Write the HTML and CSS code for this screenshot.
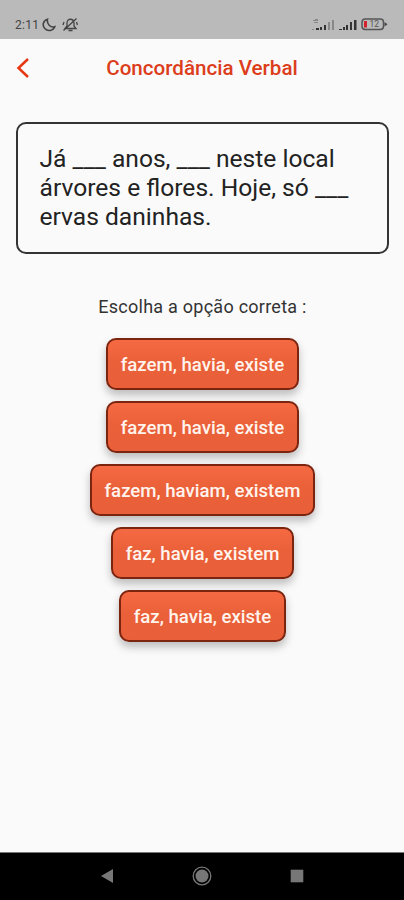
FILE: index.html
```html
<!DOCTYPE html>
<html lang="pt-BR">
<head>
<meta charset="utf-8">
<title>Concordância Verbal</title>
<link rel="stylesheet" href="styles.css">
</head>
<body>
<div class="status">
  <span class="clock">2:11</span>
  <svg class="moon" width="14" height="14" viewBox="0 0 14 14"><path d="M5.500 1.200C1 2.500 0 7.500 2.800 10.500c3 3.200 8 2.500 9.900-1.700C8.500 10 4.500 6 5.500 1.200Z"/></svg>
  <svg class="bell" width="16" height="15" viewBox="0 0 16 15"><path d="M3 11.500 5 9V6c0-5 6.500-5 7 0v3l2 2.500H3ZM6.500 13.500h4M1.500 13.500 14.500 1.500M2 5 1 8M14.500 5l1 3"/></svg>
  <svg class="signals" width="46" height="15" viewBox="0 0 46 15"><g fill="#888"><path d="M1 12h2v1H1zM2 3h2v1H2zM4 2h3v2H4zM3 5h4v1H3zM17 5h2v8h-2zM21 3h2v10h-2z"/></g><g fill="#333"><path d="M5 11h3v2H5zM9 10h2v3H9zM13 8h2v5h-2zM28 12h3v1h-3zM32 10h2v3h-2zM35 8h2v5h-2zM39 5h2v8h-2zM43 3h2.500v10H43z"/></g></svg>
  <svg class="battery" width="27" height="13" viewBox="0 0 27 13"><rect x="1" y="1" width="21.500" height="10.500" rx="3.200" fill="none" stroke="#555" stroke-width="1.500"/><path d="M23.500 4 26.500 6.300 23.500 8.600Z" fill="#444"/><rect x="3" y="3" width="3" height="6.500" fill="#d3202c"/><text x="8.500" y="9.300">12</text></svg>
</div>
<header class="bar">
  <svg class="back" width="14" height="22" viewBox="0 0 14 22"><path d="M12 2 2.500 11l9.500 9"/></svg>
  <h1>Concordância Verbal</h1>
</header>
<main>
  <p class="question">Já ___ anos, ___ neste local<br>árvores e flores. Hoje, só ___<br>ervas daninhas.</p>
  <p class="hint">Escolha a opção correta :</p>
  <div class="options">
    <button>fazem, havia, existe</button>
    <button>fazem, havia, existe</button>
    <button>fazem, haviam, existem</button>
    <button>faz, havia, existem</button>
    <button>faz, havia, existe</button>
  </div>
</main>
<nav>
  <svg width="14" height="16" viewBox="0 0 14 16"><path d="M13 1v14L1 8Z" fill="#777"/></svg>
  <svg width="20" height="20" viewBox="0 0 20 20"><circle cx="10" cy="10" r="8.800" fill="none" stroke="#777" stroke-width="1.300"/><circle cx="10" cy="10" r="6.500" fill="#777"/></svg>
  <svg width="14" height="14" viewBox="0 0 14 14"><rect x=".7" y=".7" width="12.600" height="12.600" fill="#777"/></svg>
</nav>
</body>
</html>
```
FILE: styles.css
```css
* { box-sizing: border-box; }
body {
  margin: 0;
  height: 900px;
  display: flex;
  flex-direction: column;
  overflow: hidden;
  background: #fafafa;
  color: #222;
  font-family: Roboto, sans-serif;
}
svg { display: block; flex: none; }
.status {
  height: 39px;
  flex: none;
  display: flex;
  align-items: center;
  padding: 10px 16px 0 15px;
  background: #bababa;
}
.clock { width: 25px; font-size: 12px; letter-spacing: .3px; color: #444; }
.moon, .bell { fill: none; stroke: #444; stroke-width: 1.3; }
.moon { margin-left: 2px; stroke-width: 1.6; }
.bell { margin-left: 6px; }
.signals { margin-left: auto; }
.battery { margin-left: 4px; }
.battery text { font: 8.5px Roboto, sans-serif; fill: #555; }
.bar {
  height: 58px;
  flex: none;
  display: grid;
  grid-template-columns: 40px 1fr 40px;
  align-items: center;
}
.back { margin-left: 16px; fill: none; stroke: #e53712; stroke-width: 2.5; }
h1 {
  margin: 0;
  text-align: center;
  font-size: 20.6px;
  font-weight: 500;
  line-height: 26px;
  color: #dc3d1b;
}
main { flex: 1; padding: 25px 15px 0 16px; }
.question {
  margin: 0;
  height: 132px;
  padding: 20px 21.5px;
  border: 2px solid #333;
  border-radius: 10px;
  font-size: 24.6px;
  line-height: 29px;
  white-space: nowrap;
}
.hint {
  margin: 41px 0 0;
  text-align: center;
  font-size: 18px;
  line-height: 24px;
  letter-spacing: .25px;
  color: #333;
}
.options {
  display: flex;
  flex-direction: column;
  align-items: center;
  gap: 11px;
  margin-top: 19px;
}
button {
  height: 52px;
  padding: 2px 13px 0;
  border: 2px solid #7b2410;
  border-radius: 10px;
  background: linear-gradient(#f66a43, #ea6039 45%, #e85f39);
  box-shadow: 0 5px 8px rgba(0, 0, 0, .25);
  color: #fff4ed;
  font: 500 18.6px/24px Roboto, sans-serif;
}
nav {
  height: 48px;
  flex: none;
  display: flex;
  align-items: center;
  justify-content: space-between;
  padding: 0 100px 2px;
  border-top: 1px solid #777;
  background: #000;
}
```
